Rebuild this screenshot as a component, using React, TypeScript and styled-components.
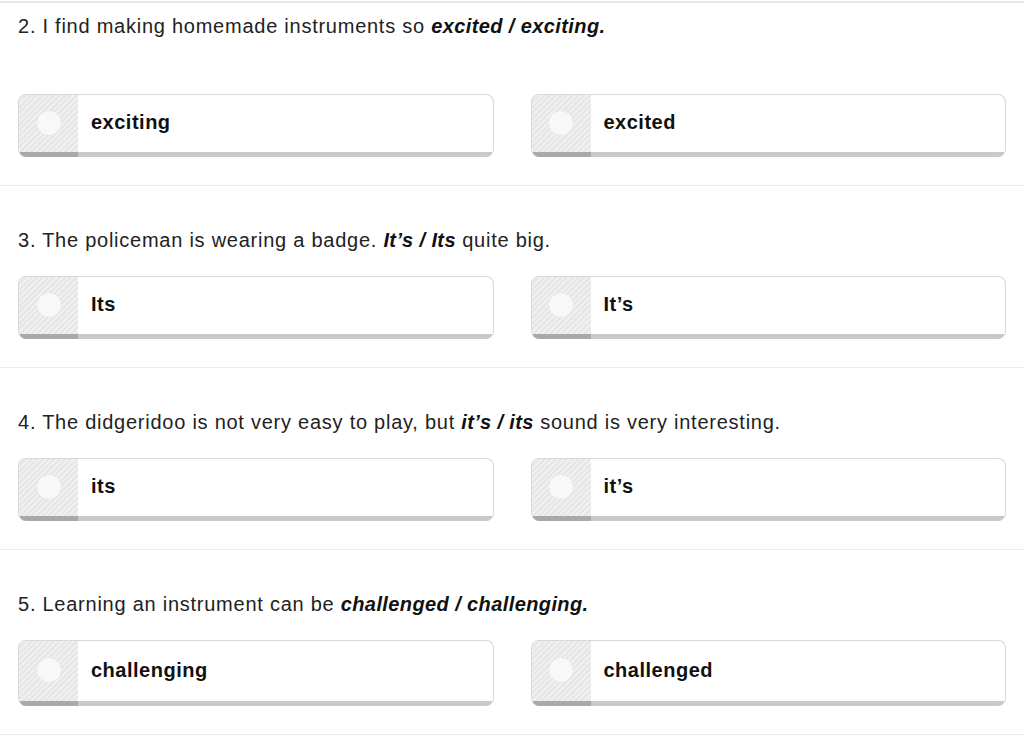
import styled, { createGlobalStyle } from "styled-components";

const GlobalStyle = createGlobalStyle`
    body {
        margin: 0;
        background: #ffffff;
        font-family: "Liberation Sans", Arial, sans-serif;
    }
`;

const Page = styled.div`
    border-top: 2px solid #e6e6e6;
    margin-top: 1px;
`;

const Section = styled.section<{ $top: number; $gap: number }>`
    padding: ${(p) => p.$top}px 18px 28px;
    border-bottom: 1px solid #ececec;

    .question {
        font-size: 20px;
        line-height: 24px;
        letter-spacing: 0.75px;
        color: #222;
        margin: 0 0 ${(p) => p.$gap}px;
        font-weight: normal;

        b {
            font-style: italic;
            color: #111;
            letter-spacing: 0.4px;
        }
    }
`;

const Options = styled.div`
    display: grid;
    grid-template-columns: 1fr 1fr;
    gap: 37px;
`;

const Card = styled.div<{ $tall?: boolean }>`
    display: flex;
    height: ${(p) => (p.$tall ? 66 : 63)}px;
    box-sizing: border-box;
    border: 1px solid #d8d8d8;
    border-bottom: none;
    border-radius: 8px;
    overflow: hidden;
    background: #fff;
`;

const Stripe = styled.div`
    width: 59px;
    flex: none;
    display: flex;
    align-items: center;
    justify-content: center;
    padding-bottom: 2px;
    box-sizing: border-box;
    background: repeating-linear-gradient(
        135deg,
        #e6e6e6 0 2px,
        #f0f0f0 2px 4px
    );
    border-bottom: 5px solid #a9a9a9;

    span {
        width: 24px;
        height: 24px;
        border-radius: 50%;
        background: #f8f8f8;
        box-shadow: 0 0 1px rgba(0, 0, 0, 0.08);
    }
`;

const Label = styled.div`
    flex: 1;
    display: flex;
    align-items: center;
    padding: 0 0 2px 13px;
    border-bottom: 5px solid #c9c9c9;
    font-size: 20px;
    font-weight: bold;
    letter-spacing: 0.5px;
    color: #111;
`;

interface Question {
    num: number;
    before: string;
    bold: string;
    after: string;
    options: string[];
}

const questions: Question[] = [
    {
        num: 2,
        before: "I find making homemade instruments so ",
        bold: "excited / exciting.",
        after: "",
        options: ["exciting", "excited"],
    },
    {
        num: 3,
        before: "The policeman is wearing a badge. ",
        bold: "It’s / Its",
        after: " quite big.",
        options: ["Its", "It’s"],
    },
    {
        num: 4,
        before: "The didgeridoo is not very easy to play, but ",
        bold: "it’s / its",
        after: " sound is very interesting.",
        options: ["its", "it’s"],
    },
    {
        num: 5,
        before: "Learning an instrument can be ",
        bold: "challenged / challenging.",
        after: "",
        options: ["challenging", "challenged"],
    },
];

function OptionCard(props: { text: string; tall?: boolean }) {
    return (
        <Card $tall={props.tall}>
            <Stripe>
                <span />
            </Stripe>
            <Label>{props.text}</Label>
        </Card>
    );
}

export default function App() {
    return (
        <Page>
            <GlobalStyle />
            {questions.map((q, i) => (
                <Section key={q.num} $top={i === 0 ? 11 : 42} $gap={i === 0 ? 56 : 24}>
                    <p className="question">
                        {q.num}. {q.before}
                        <b>{q.bold}</b>
                        {q.after}
                    </p>
                    <Options>
                        {q.options.map((o) => (
                            <OptionCard key={o} text={o} tall={i === questions.length - 1} />
                        ))}
                    </Options>
                </Section>
            ))}
        </Page>
    );
}
